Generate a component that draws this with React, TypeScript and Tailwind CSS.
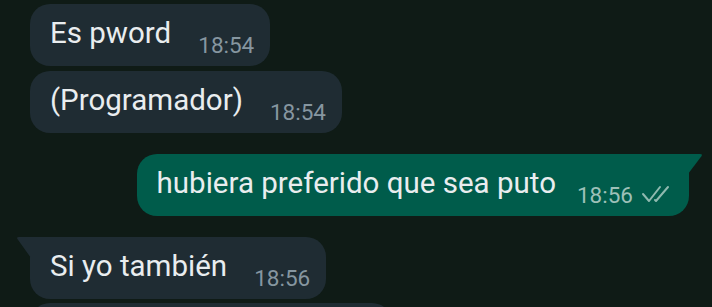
import React from "react";

const font = { fontFamily: "Roboto, 'Noto Sans', sans-serif" };

function Received({
  text,
  time,
  tail = false,
}: {
  text: string;
  time: string;
  tail?: boolean;
}) {
  return (
    <div className="flex shrink-0 pl-[30px]">
      <div
        className={`relative flex h-[62px] items-start bg-[#1f2c33] pl-[20px] pr-[16px] pt-[12px] ${
          tail ? "rounded-[20px] rounded-tl-none" : "rounded-[20px]"
        }`}
      >
        {tail && (
          <svg
            className="absolute left-[-14px] top-0"
            width="15"
            height="22"
            viewBox="0 0 15 22"
          >
            <path d="M15 0 L3 0 Q0 0 1.6 2.2 L15 21 Z" fill="#1f2c33" />
          </svg>
        )}
        <div className="text-[29.5px] leading-[34px] text-[#e9edef]">{text}</div>
        <div className="ml-[27px] mt-[17px] text-[22.5px] leading-[24px] text-[#8696a0]">
          {time}
        </div>
      </div>
    </div>
  );
}

function Sent({ text, time }: { text: string; time: string }) {
  return (
    <div className="flex shrink-0 justify-end pr-[23px]">
      <div className="relative flex h-[62px] items-start rounded-[20px] rounded-tr-none bg-[#005c4b] pl-[20px] pr-[17px] pt-[12px]">
        <svg
          className="absolute right-[-14px] top-0"
          width="15"
          height="22"
          viewBox="0 0 15 22"
        >
          <path d="M0 0 L12 0 Q15 0 13.4 2.2 L0 20 Z" fill="#005c4b" />
        </svg>
        <div className="text-[29.5px] leading-[34px] text-[#e9edef]">{text}</div>
        <div className="ml-[21px] mt-[17px] flex items-center text-[22.5px] leading-[24px] text-[#9dc0b8]">
          <span>{time}</span>
          <svg
            className="ml-[8px] mt-[-2px]"
            width="31"
            height="20"
            viewBox="0 0 31 20"
            fill="none"
            stroke="#8fb9af"
            strokeWidth="2"
            strokeLinecap="round"
            strokeLinejoin="round"
          >
            <path d="M2 10 L8 17 L19 3" />
            <path d="M14 16 L15 17 L27 3" />
          </svg>
        </div>
      </div>
    </div>
  );
}

export default function App() {
  return (
    <div
      className="flex h-[307px] w-[712px] flex-col overflow-hidden bg-[#0f1b16] pt-[4px]"
      style={font}
    >
      <Received text="Es pword" time="18:54" />
      <div className="h-[5px] shrink-0" />
      <Received text="(Programador)" time="18:54" />
      <div className="h-[21px] shrink-0" />
      <Sent text="hubiera preferido que sea puto" time="18:56" />
      <div className="h-[21px] shrink-0" />
      <Received text="Si yo también" time="18:56" tail />
      <div className="h-[4px] shrink-0" />
      <div className="flex shrink-0 pl-[30px]">
        <div className="h-[62px] w-[362px] rounded-[20px] bg-[#1f2c33]" />
      </div>
    </div>
  );
}
